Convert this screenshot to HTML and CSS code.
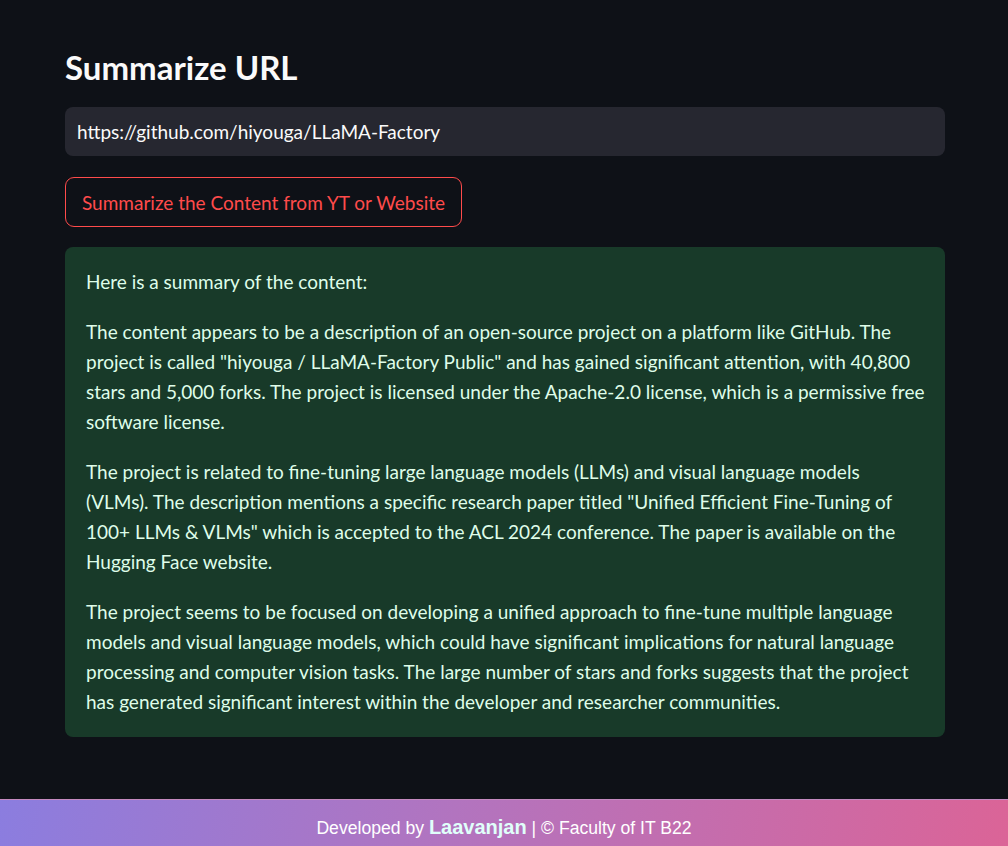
FILE: index.html
```html
<!DOCTYPE html>
<html lang="en">
<head>
<meta charset="utf-8">
<title>Summarize URL</title>
<link rel="stylesheet" href="styles.css">
</head>
<body>
<main class="main">
  <h1 class="title">Summarize URL</h1>
  <div class="input-box">https://github.com/hiyouga/LLaMA-Factory</div>
  <button class="btn" type="button">Summarize the Content from YT or Website</button>
  <div class="success">
    <p>Here is a summary of the content:</p>
    <p>The content appears to be a description of an open-source project on a platform like GitHub. The project is called "hiyouga / LLaMA-Factory Public" and has gained significant attention, with 40,800 stars and 5,000 forks. The project is licensed under the Apache-2.0 license, which is a permissive free software license.</p>
    <p>The project is related to fine-tuning large language models (LLMs) and visual language models (VLMs). The description mentions a specific research paper titled "Unified Efficient Fine-Tuning of 100+ LLMs &amp; VLMs" which is accepted to the ACL 2024 conference. The paper is available on the Hugging Face website.</p>
    <p>The project seems to be focused on developing a unified approach to fine-tune multiple language models and visual language models, which could have significant implications for natural language processing and computer vision tasks. The large number of stars and forks suggests that the project has generated significant interest within the developer and researcher communities.</p>
  </div>
</main>
<footer class="footer">
  <p class="footer-text">Developed by <span class="author">Laavanjan</span> | © Faculty of IT B22</p>
</footer>
</body>
</html>
```
FILE: styles.css
```css
html, body {
  margin: 0;
  padding: 0;
  background: #0e1117;
  height: 100%;
}
body {
  font-family: Lato, "Noto Sans", sans-serif;
  color: #fafafa;
}
.main {
  width: 880px;
  margin-left: 65px;
  padding-top: 46px;
  display: flex;
  flex-direction: column;
  align-items: flex-start;
}
.title {
  margin: 0;
  font-size: 33px;
  font-weight: 700;
  line-height: 42px;
  color: #fafafa;
  height: 42px;
}
.input-box {
  margin-top: 19px;
  box-sizing: border-box;
  width: 100%;
  height: 49px;
  background: #262730;
  border-radius: 8px;
  padding: 0 12px;
  display: flex;
  align-items: center;
  font-size: 19px;
  color: #fafafa;
}
.btn {
  margin-top: 21px;
  height: 50px;
  box-sizing: border-box;
  background: #0e1117;
  border: 1px solid #ff4b4b;
  border-radius: 9px;
  color: #ff4b4b;
  font-family: inherit;
  font-size: 19px;
  padding: 0 16px;
}
.success {
  margin-top: 20px;
  box-sizing: border-box;
  width: 100%;
  background: #183a29;
  border-radius: 8px;
  padding: 20px 20px 20px 21px;
  color: #dffde9;
  font-size: 19px;
  line-height: 30px;
}
.success p {
  margin: 0 0 20px;
}
.success p:last-child {
  margin-bottom: 0;
}
.footer {
  position: fixed;
  left: 0;
  right: 0;
  bottom: 0;
  height: 47px;
  box-sizing: border-box;
  border-top: 1px solid #c48ac0;
  background: linear-gradient(100deg, #8b7ddf 0%, #b274bf 45%, #db6497 100%);
  color: #ffffff;
  font-family: "Liberation Sans", Arial, sans-serif;
  font-size: 17.6px;
  text-align: center;
}
.footer-text {
  margin: 0;
  padding-top: 15px;
  line-height: 24px;
}
.author {
  font-size: 20px;
  font-weight: 700;
  color: #e0fffa;
}
```
